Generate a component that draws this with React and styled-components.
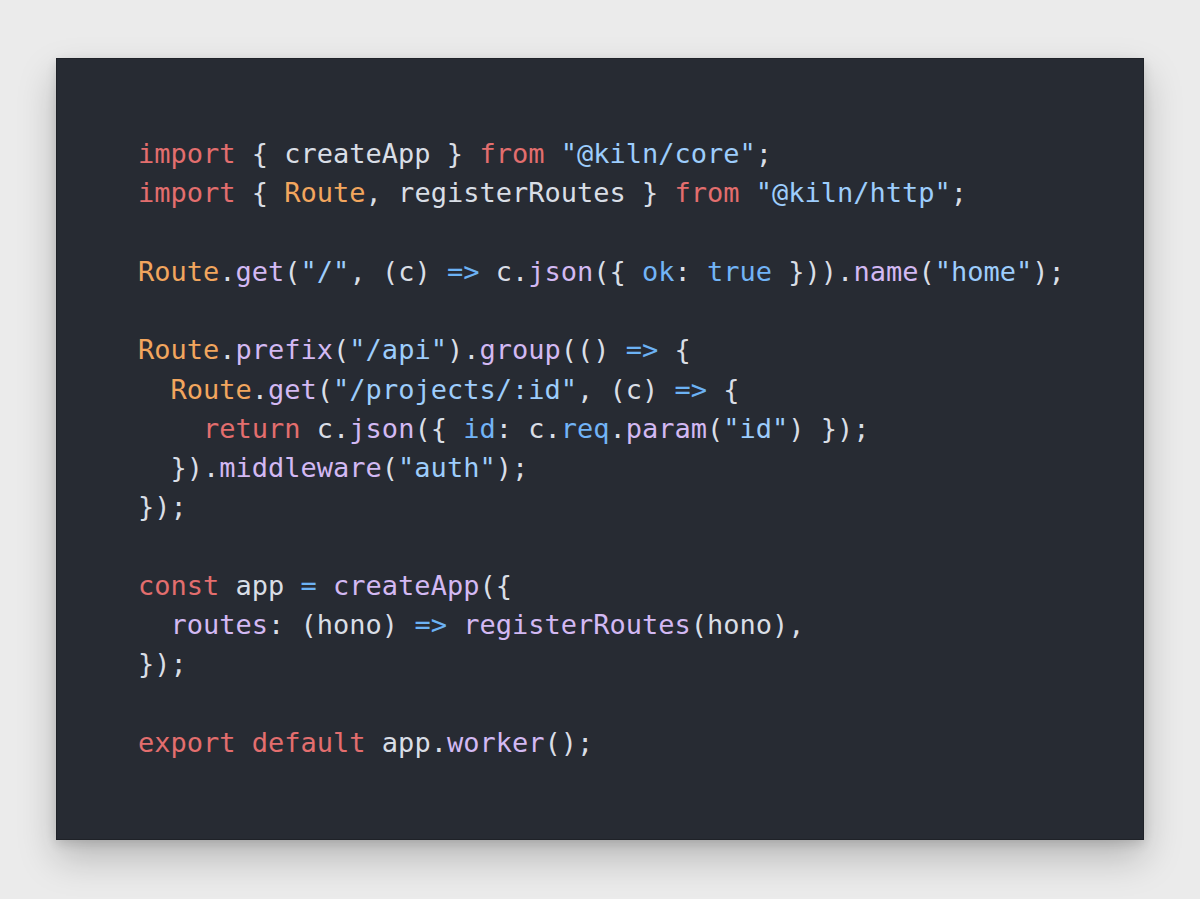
import React from 'react';
import styled, { createGlobalStyle } from 'styled-components';

const colors = {
  kw: '#e36e6e',
  cls: '#f2a65e',
  fn: '#d3b9f3',
  str: '#9dcdfc',
  op: '#6cb2f4',
  prop: '#72b4f7',
  plain: '#d9dee6',
};

const GlobalStyle = createGlobalStyle`
  html, body {
    margin: 0;
    padding: 0;
    background: #ebebeb;
  }
`;

const Page = styled.div`
  box-sizing: border-box;
  width: 100%;
  min-height: 100vh;
  padding: 58px 56px 59px;
  display: flex;
  justify-content: center;
`;

const Panel = styled.div`
  width: 1088px;
  min-width: 0;
  height: 782px;
  box-sizing: border-box;
  overflow: hidden;
  background: #272b33;
  border: 1px solid #1f2228;
  box-shadow: 0 18px 36px rgba(0, 0, 0, 0.22), 0 4px 10px rgba(0, 0, 0, 0.12);
  padding: 75px 60px 75px 81px;
`;

const Code = styled.pre`
  margin: 0;
  font-family: "DejaVu Sans Mono", "Liberation Mono", monospace;
  font-size: 27px;
  line-height: 39.27px;
  color: ${colors.plain};
  white-space: pre;
`;

const Line = styled.div`
  min-height: 39.27px;
`;

const T = styled.span`
  color: ${(p) => colors[p.$k] || colors.plain};
`;

// each line is a list of [kind, text]
const lines = [
  [['kw', 'import'], ['plain', ' { createApp } '], ['kw', 'from'], ['plain', ' '], ['str', '"@kiln/core"'], ['plain', ';']],
  [['kw', 'import'], ['plain', ' { '], ['cls', 'Route'], ['plain', ', registerRoutes } '], ['kw', 'from'], ['plain', ' '], ['str', '"@kiln/http"'], ['plain', ';']],
  [],
  [['cls', 'Route'], ['plain', '.'], ['fn', 'get'], ['plain', '('], ['str', '"/"'], ['plain', ', (c) '], ['op', '=>'], ['plain', ' c.'], ['fn', 'json'], ['plain', '({ '], ['prop', 'ok'], ['plain', ': '], ['prop', 'true'], ['plain', ' })).'], ['fn', 'name'], ['plain', '('], ['str', '"home"'], ['plain', ');']],
  [],
  [['cls', 'Route'], ['plain', '.'], ['fn', 'prefix'], ['plain', '('], ['str', '"/api"'], ['plain', ').'], ['fn', 'group'], ['plain', '(() '], ['op', '=>'], ['plain', ' {']],
  [['plain', '  '], ['cls', 'Route'], ['plain', '.'], ['fn', 'get'], ['plain', '('], ['str', '"/projects/:id"'], ['plain', ', (c) '], ['op', '=>'], ['plain', ' {']],
  [['plain', '    '], ['kw', 'return'], ['plain', ' c.'], ['fn', 'json'], ['plain', '({ '], ['prop', 'id'], ['plain', ': c.'], ['prop', 'req'], ['plain', '.'], ['fn', 'param'], ['plain', '('], ['str', '"id"'], ['plain', ') });']],
  [['plain', '  }).'], ['fn', 'middleware'], ['plain', '('], ['str', '"auth"'], ['plain', ');']],
  [['plain', '});']],
  [],
  [['kw', 'const'], ['plain', ' app '], ['op', '='], ['plain', ' '], ['fn', 'createApp'], ['plain', '({']],
  [['plain', '  '], ['fn', 'routes'], ['plain', ': (hono) '], ['op', '=>'], ['plain', ' '], ['fn', 'registerRoutes'], ['plain', '(hono),']],
  [['plain', '});']],
  [],
  [['kw', 'export'], ['plain', ' '], ['kw', 'default'], ['plain', ' app.'], ['fn', 'worker'], ['plain', '();']],
];

export default function App() {
  return (
    <>
      <GlobalStyle />
      <Page>
        <Panel>
          <Code>
            {lines.map((line, i) => (
              <Line key={i}>
                {line.map(([k, text], j) => (
                  <T key={j} $k={k}>{text}</T>
                ))}
              </Line>
            ))}
          </Code>
        </Panel>
      </Page>
    </>
  );
}
